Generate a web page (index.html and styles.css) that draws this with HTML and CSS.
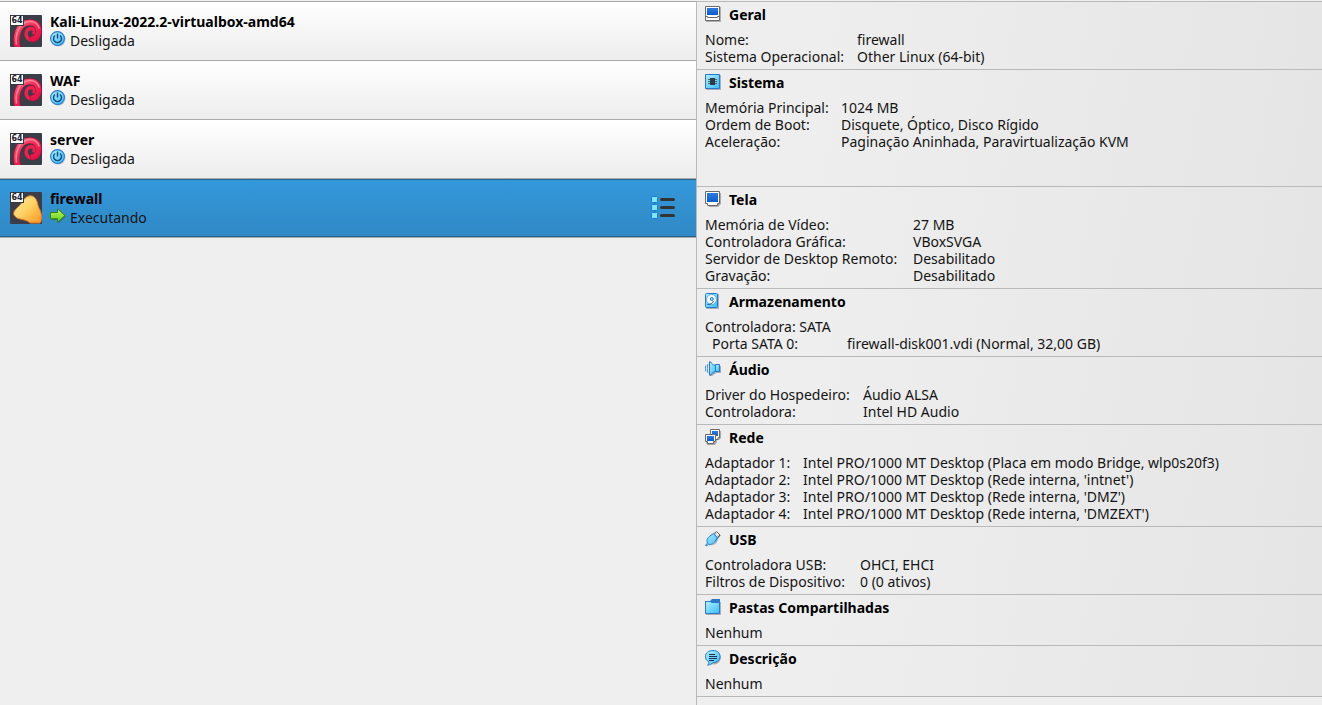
FILE: index.html
```html
<!DOCTYPE html>
<html lang="pt-BR">
<head>
<meta charset="utf-8">
<meta name="viewport" content="width=device-width, initial-scale=1">
<title>Máquinas virtuais</title>
<link rel="stylesheet" href="styles.css">
</head>
<body>
<svg class="defs" aria-hidden="true">
  <defs>
    <linearGradient id="cyan" x1="0" y1="0" x2="1" y2="1"><stop offset="0" stop-color="#b4f0ff"/><stop offset="1" stop-color="#35bdfa"/></linearGradient>
    <linearGradient id="red" gradientUnits="userSpaceOnUse" x1="6" y1="4" x2="24" y2="30"><stop offset="0" stop-color="#ff7088"/><stop offset=".5" stop-color="#f62a55"/><stop offset="1" stop-color="#e00c46"/></linearGradient>
    <linearGradient id="gold" x1="0" y1="0" x2="1" y2="1"><stop offset="0" stop-color="#fff0a0"/><stop offset=".5" stop-color="#ffd060"/><stop offset="1" stop-color="#ff9420"/></linearGradient>
    <linearGradient id="green" x1="0" y1="0" x2="0" y2="1"><stop offset="0" stop-color="#c0f860"/><stop offset="1" stop-color="#58d010"/></linearGradient>
    <linearGradient id="blue" x1="0" y1="0" x2="0" y2="1"><stop offset="0" stop-color="#2d7be0"/><stop offset="1" stop-color="#0a5cd0"/></linearGradient>
    <clipPath id="tile"><rect width="32" height="32" rx="1"/></clipPath>
    <symbol id="badge" viewBox="0 0 14 11">
      <path d="M0 0H14V11H0z" fill="#343842"/><path d="M1 1H13V10H1z" fill="#fff"/>
      <text class="bits" x="7" y="8" text-anchor="middle">64</text>
    </symbol>
    <symbol id="debian" viewBox="0 0 32 32">
      <rect width="32" height="32" rx="1" fill="#393e49"/>
      <g clip-path="url(#tile)" fill="none" stroke-linecap="round">
        <path d="M28.500 15C29.500 23 22 27 18 23.500C14.500 20 16 14 21 13.500C24 13.500 25 16 24 18" stroke="#f0204c" stroke-width="3.400"/>
        <path d="M8 34C4 21 9 8 19 7.500C25 7 29 11 28.500 17C28 21 26 23.500 23 24" stroke="#a80a38" stroke-width="6.600"/>
        <path d="M8 34C4 21 9 8 19 7.500C25 7 29 11 28.500 17C28 21 26 23.500 23 24" stroke="url(#red)" stroke-width="5.600"/>
        <path d="M6.500 29C5 20 9 8 19 6.500C24 6 28 9 29 13" stroke="#ff9dab" stroke-width="1.600" opacity=".75"/>
      </g>
      <use href="#badge" width="14" height="11"/>
    </symbol>
    <symbol id="other" viewBox="0 0 32 32">
      <rect width="32" height="32" rx="1" fill="#393e49"/>
      <path d="M4 20C5 17 10 14 13 9C15 5 20 2 24 5C28 8 27 13 30 18C32 22 32 29 30 31H20C16 27 11 28 7 26C4 24 3 22 4 20z" fill="url(#gold)" stroke="#e8742a" stroke-width="1"/>
      <use href="#badge" width="14" height="11"/>
    </symbol>
    <symbol id="power" viewBox="0 0 16 16">
      <circle cx="8.500" cy="8.500" r="7" fill="#8a98a8" opacity=".5"/>
      <circle cx="7.500" cy="7.500" r="6.900" fill="url(#cyan)" stroke="#2777cf" stroke-width="1.100"/>
      <path d="M5 4.500A4 4 0 1 0 10 4.500M7.500 2.500V7.500" fill="none" stroke="#164a80" stroke-width="1.400"/>
    </symbol>
    <symbol id="run" viewBox="0 0 16 16">
      <path d="M1.500 6H8.500V1.800L16 8.500L8.500 15.500V12H1.500z" fill="#345b70" opacity=".6"/>
      <path d="M.5 4.500H7.500V.8L15 7.500L7.500 14.500V10.800H.5z" fill="url(#green)" stroke="#32850c"/>
    </symbol>
    <symbol id="monitor" viewBox="0 0 16 16">
      <path d="M2 2H16V13L13 16H4z" fill="#aaa"/>
      <path d="M.5.5H14.500V12.500H12.500V14.500H2.500V12.500H.5z" fill="#fff" stroke="#6b6b6b"/>
      <path d="M2 2H13V11H2z" fill="url(#blue)"/>
    </symbol>
    <symbol id="computer" viewBox="0 0 16 16">
      <path d="M1 1H16V16H1z" fill="#b0b0b0"/>
      <path d="M.5.5H14.500V14.500H.5z" fill="#fff" stroke="#6b6b6b"/>
      <path d="M2 2H13V9H2z" fill="url(#blue)"/><path d="M1 10.500H2.500V11.500H12.500V10.500H14" fill="none" stroke="#6b6b6b"/>
    </symbol>
    <symbol id="chip" viewBox="0 0 16 16">
      <path d="M1 1H16V16H1z" fill="#b0b0b0"/>
      <path d="M.5.5H14.500V14.500H.5z" fill="url(#cyan)" stroke="#2678cc"/>
      <path d="M5 4H10V11H5z" fill="#343a44"/><path d="M3 5.500H12M3 7.500H12M3 9.500H12" stroke="#343a44" opacity=".7"/>
    </symbol>
    <symbol id="disk" viewBox="0 0 16 16">
      <path d="M1 1H14V16H1z" fill="#a8b0b8"/>
      <rect x=".5" y=".5" width="12" height="14" rx="1" fill="url(#cyan)" stroke="#2678cc"/>
      <circle cx="6.500" cy="6.500" r="5" fill="#f4fcff" stroke="#4b9de0" stroke-width=".8"/>
      <circle cx="6.800" cy="6" r="1.500" fill="#9de4ff" stroke="#2678cc"/>
      <path d="M2.500 11.500C5.500 11.500 7.500 10.500 8.500 8" fill="none" stroke="#174f92"/>
    </symbol>
    <symbol id="speaker" viewBox="0 0 16 16">
      <path d="M12 5H16V12H11L7 15H5V13z" fill="#a4aab2"/>
      <path d="M4.500.8H5.500C6.500 2.500 8 4 10.500 4.500V10.500C8 11 6.500 12.500 5.500 14.200H4.500z" fill="url(#cyan)" stroke="#2678cc"/>
      <path d="M10.500 3.500H14.500V10.500H10.500z" fill="url(#cyan)" stroke="#2678cc"/>
      <path d="M2.800 3Q1.800 7.500 2.800 12M.8 4.500Q0 7.500.8 10.500" fill="none" stroke="#2678cc" stroke-width=".8"/>
    </symbol>
    <symbol id="network" viewBox="0 0 16 16">
      <path d="M6 2H16V9L14 11H12V13L10 16H2L1 13z" fill="#a8a8a8"/>
      <path d="M5.500.5H14.500V8.500H13V10.500H7V8.500H5.500z" fill="#fff" stroke="#6b6b6b"/><path d="M7 2H13V7H7z" fill="url(#blue)"/>
      <path d="M.5 5.500H10.500V12.500H8.500V14.500H2.500V12.500H.5z" fill="#fff" stroke="#6b6b6b"/><path d="M2 7H9V12H2z" fill="url(#blue)"/>
    </symbol>
    <symbol id="usb" viewBox="0 0 16 16">
      <path d="M2 15.500L5 14C9 15 12 12 13 8L16 4L14 4L9 13z" fill="#9aa0a8"/>
      <path d="M8.500 3L11.500.5L15 4L12.500 7z" fill="#fff" stroke="#555" stroke-width="1"/><path d="M10.500 3H11.500M12.500 5H13.500" stroke="#333"/>
      <path d="M.5 14.500L2.500 12C1 9 3 6.500 5 5L8.500 2.500L12.500 7L10 10.500C8 13.500 5 14 3.500 13L1.500 15z" fill="url(#cyan)" stroke="#2678cc"/>
    </symbol>
    <symbol id="folder" viewBox="0 0 16 16">
      <path d="M1 3H16V16H1z" fill="#b0b0b0"/><path d="M0 2H5L7 0H15V4H0z" fill="#2678cc"/>
      <path d="M.5 2.500H5.500L6.500 3.500H14.500V14.500H.5z" fill="url(#cyan)" stroke="#2678cc"/>
    </symbol>
    <symbol id="bubble" viewBox="0 0 16 16">
      <ellipse cx="8.800" cy="8" rx="7" ry="6.500" fill="#a8a8a8"/>
      <path d="M8 .5C12.500.5 15 3 15 6.500S12.500 12.500 8 12.500C7 14 5 15 2.500 15C4 14 4 13 3.500 11.500C1.500 10.500.5 9 .5 6.500C.5 3 3.500.5 8 .5z" fill="url(#cyan)" stroke="#2678cc"/>
      <path d="M4 4.500H10M4 6.500H12M4 8.500H12M4 10.500H9" stroke="#183058"/>
    </symbol>
  </defs>
</svg>
<main class="manager">
  <nav class="machines" aria-label="Máquinas virtuais">
    <ul class="machine-list">
      <li class="machine"><svg class="os-icon"><use href="#debian"/></svg><div class="machine-text"><div class="machine-name">Kali-Linux-2022.2-virtualbox-amd64</div><div class="state"><svg class="icon"><use href="#power"/></svg><span>Desligada</span></div></div></li>
      <li class="machine"><svg class="os-icon"><use href="#debian"/></svg><div class="machine-text"><div class="machine-name">WAF</div><div class="state"><svg class="icon"><use href="#power"/></svg><span>Desligada</span></div></div></li>
      <li class="machine"><svg class="os-icon"><use href="#debian"/></svg><div class="machine-text"><div class="machine-name">server</div><div class="state"><svg class="icon"><use href="#power"/></svg><span>Desligada</span></div></div></li>
      <li class="machine selected"><svg class="os-icon"><use href="#other"/></svg><div class="machine-text"><div class="machine-name">firewall</div><div class="state"><svg class="icon"><use href="#run"/></svg><span>Executando</span></div></div>
        <button class="menu-button" type="button" aria-label="Detalhes"><svg class="menu-icon" viewBox="0 0 26 24"><g fill="#80e6ff" stroke="#1878d8"><rect x="1.500" y=".5" width="6" height="6" rx="1"/><rect x="1.500" y="8.500" width="6" height="6" rx="1"/><rect x="1.500" y="16.500" width="6" height="6" rx="1"/></g><path d="M11.500 3.500H23.500M11.500 11.500H23.500M11.500 19.500H23.500" stroke="#333" stroke-width="3" stroke-linecap="round"/></svg></button></li>
    </ul>
  </nav>
  <div class="details">
    <section class="panel"><h2><svg class="icon"><use href="#computer"/></svg>Geral</h2>
      <table class="general"><tr><th scope="row">Nome:</th><td>firewall</td></tr><tr><th scope="row">Sistema Operacional:</th><td>Other Linux (64-bit)</td></tr></table></section>
    <section class="panel system"><h2><svg class="icon"><use href="#chip"/></svg>Sistema</h2>
      <table class="hardware"><tr><th scope="row">Memória Principal:</th><td>1024 MB</td></tr><tr><th scope="row">Ordem de Boot:</th><td>Disquete, Óptico, Disco Rígido</td></tr><tr><th scope="row">Aceleração:</th><td>Paginação Aninhada, Paravirtualização KVM</td></tr></table></section>
    <section class="panel"><h2><svg class="icon"><use href="#monitor"/></svg>Tela</h2>
      <table class="display"><tr><th scope="row">Memória de Vídeo:</th><td>27 MB</td></tr><tr><th scope="row">Controladora Gráfica:</th><td>VBoxSVGA</td></tr><tr><th scope="row">Servidor de Desktop Remoto:</th><td>Desabilitado</td></tr><tr><th scope="row">Gravação:</th><td>Desabilitado</td></tr></table></section>
    <section class="panel"><h2><svg class="icon"><use href="#disk"/></svg>Armazenamento</h2>
      <table class="storage"><tr><th scope="row">Controladora: SATA</th><td></td></tr><tr><th scope="row" class="nested">Porta SATA 0:</th><td>firewall-disk001.vdi (Normal, 32,00 GB)</td></tr></table></section>
    <section class="panel"><h2><svg class="icon"><use href="#speaker"/></svg>Áudio</h2>
      <table class="audio"><tr><th scope="row">Driver do Hospedeiro:</th><td>Áudio ALSA</td></tr><tr><th scope="row">Controladora:</th><td>Intel HD Audio</td></tr></table></section>
    <section class="panel"><h2><svg class="icon"><use href="#network"/></svg>Rede</h2>
      <table class="adapters"><tr><th scope="row">Adaptador 1:</th><td>Intel PRO/1000 MT Desktop (Placa em modo Bridge, wlp0s20f3)</td></tr><tr><th scope="row">Adaptador 2:</th><td>Intel PRO/1000 MT Desktop (Rede interna, 'intnet')</td></tr><tr><th scope="row">Adaptador 3:</th><td>Intel PRO/1000 MT Desktop (Rede interna, 'DMZ')</td></tr><tr><th scope="row">Adaptador 4:</th><td>Intel PRO/1000 MT Desktop (Rede interna, 'DMZEXT')</td></tr></table></section>
    <section class="panel"><h2><svg class="icon"><use href="#usb"/></svg>USB</h2>
      <table class="ports"><tr><th scope="row">Controladora USB:</th><td>OHCI, EHCI</td></tr><tr><th scope="row">Filtros de Dispositivo:</th><td>0 (0 ativos)</td></tr></table></section>
    <section class="panel"><h2><svg class="icon"><use href="#folder"/></svg>Pastas Compartilhadas</h2><p>Nenhum</p></section>
    <section class="panel last"><h2><svg class="icon"><use href="#bubble"/></svg>Descrição</h2><p>Nenhum</p></section>
  </div>
</main>
</body>
</html>
```
FILE: styles.css
```css
* { box-sizing: border-box; }
body { margin: 0; background: #efefef; color: #141414; font: 14px/17px "Noto Sans", "Open Sans", sans-serif; }
.defs { position: absolute; width: 0; height: 0; }
.bits { font: bold 8px "DejaVu Sans", sans-serif; fill: #20242c; }
.manager { display: grid; grid-template-columns: 696fr 626fr; min-height: 100vh; padding-top: 1px; }
.machine-list { list-style: none; margin: 0; padding: 0; }
.machine { display: flex; align-items: center; gap: 8px; height: 59px; padding: 0 20px 0 10px; border-top: 1px solid #a9a9a9; background: linear-gradient(#fff, #ededed); }
.machine.selected { height: 60px; border-bottom: 1px solid #a9a9a9; background: linear-gradient(#3498db, #3089c4); box-shadow: inset 0 1px #25648f, inset 0 -1px #25648f; }
.os-icon { width: 32px; height: 32px; flex: none; }
.icon { width: 16px; height: 16px; flex: none; }
.machine-text { flex: 1; min-width: 0; padding-top: 2px; }
.machine-name { font-weight: 700; line-height: 18px; color: #000; }
.state { display: flex; align-items: flex-start; gap: 4px; line-height: 20px; }
.menu-button { padding: 0; border: 0; background: none; }
.menu-icon { display: block; width: 26px; height: 24px; }
.details { border-left: 1px solid #b9b9b9; }
.panel { padding: 0 8px 4px; border-top: 1px solid #b9b9b9; background: linear-gradient(100deg, #eee 20%, #e5e5e5); }
.panel.system { padding-bottom: 36px; }
.panel.last { border-bottom: 1px solid #b9b9b9; }
h2 { display: flex; align-items: flex-start; gap: 8px; margin: 0; padding: 4px 0 7px; font-size: 14px; line-height: 18px; color: #000; }
p { margin: 0; }
table { width: 100%; table-layout: fixed; border-collapse: collapse; }
tr { height: 17px; }
th, td { padding: 0; font-weight: 400; text-align: left; white-space: nowrap; }
.general th { width: 152px; }
.hardware th { width: 136px; }
.display th { width: 208px; }
.storage th { width: 142px; }
.audio th { width: 158px; }
.adapters th { width: 98px; }
.ports th { width: 155px; }
.storage .nested { padding-left: 7px; }
```
